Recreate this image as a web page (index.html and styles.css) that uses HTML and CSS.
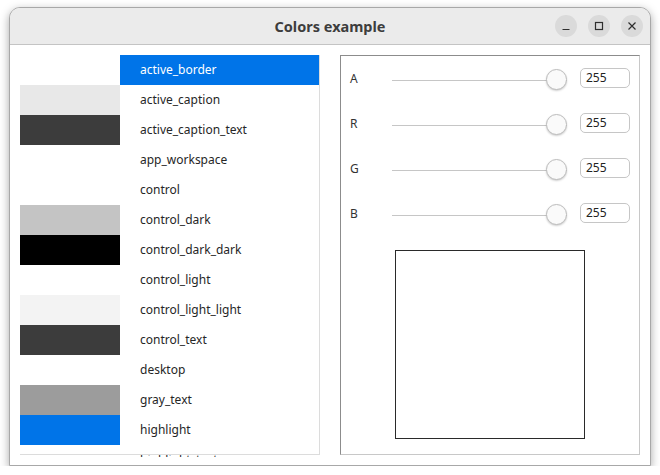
FILE: index.html
```html
<!DOCTYPE html>
<html>
<head>
<meta charset="utf-8">
<link rel="stylesheet" href="styles.css">
</head>
<body>
<div class="window">
  <div class="titlebar">
    <div class="title">Colors example</div>
    <div class="buttons">
      <div class="wbtn"><svg width="10" height="10" viewBox="0 0 10 10"><line x1="1.5" y1="8.5" x2="8.5" y2="8.5" stroke="#2e2e2e" stroke-width="1.2"/></svg></div>
      <div class="wbtn"><svg width="10" height="10" viewBox="0 0 10 10"><rect x="1.5" y="1.5" width="7" height="7" fill="none" stroke="#2e2e2e" stroke-width="1.2"/></svg></div>
      <div class="wbtn"><svg width="10" height="10" viewBox="0 0 10 10"><path d="M1.5 1.5 L8.5 8.5 M8.5 1.5 L1.5 8.5" stroke="#2e2e2e" stroke-width="1.2"/></svg></div>
    </div>
  </div>
  <div class="content">
    <div class="list">
      <div class="row sel"><div class="sw" style="background:#ffffff"></div><div class="name">active_border</div></div>
      <div class="row"><div class="sw" style="background:#e8e8e8"></div><div class="name">active_caption</div></div>
      <div class="row"><div class="sw" style="background:#3c3c3c"></div><div class="name">active_caption_text</div></div>
      <div class="row"><div class="sw" style="background:#ffffff"></div><div class="name">app_workspace</div></div>
      <div class="row"><div class="sw" style="background:#ffffff"></div><div class="name">control</div></div>
      <div class="row"><div class="sw" style="background:#c4c4c4"></div><div class="name">control_dark</div></div>
      <div class="row"><div class="sw" style="background:#000000"></div><div class="name">control_dark_dark</div></div>
      <div class="row"><div class="sw" style="background:#ffffff"></div><div class="name">control_light</div></div>
      <div class="row"><div class="sw" style="background:#f3f3f3"></div><div class="name">control_light_light</div></div>
      <div class="row"><div class="sw" style="background:#3c3c3c"></div><div class="name">control_text</div></div>
      <div class="row"><div class="sw" style="background:#ffffff"></div><div class="name">desktop</div></div>
      <div class="row"><div class="sw" style="background:#9c9c9c"></div><div class="name">gray_text</div></div>
      <div class="row"><div class="sw" style="background:#0074e8"></div><div class="name">highlight</div></div>
      <div class="row"><div class="sw" style="background:#ffffff"></div><div class="name">highlight_text</div></div>
    </div>
    <div class="panel">
      <div class="srow"><div class="lbl">A</div><div class="slider"><div class="track"></div><div class="knob"></div></div><div class="num">255</div></div>
      <div class="srow"><div class="lbl">R</div><div class="slider"><div class="track"></div><div class="knob"></div></div><div class="num">255</div></div>
      <div class="srow"><div class="lbl">G</div><div class="slider"><div class="track"></div><div class="knob"></div></div><div class="num">255</div></div>
      <div class="srow"><div class="lbl">B</div><div class="slider"><div class="track"></div><div class="knob"></div></div><div class="num">255</div></div>
      <div class="preview"></div>
    </div>
  </div>
</div>
</body>
</html>
```
FILE: styles.css
```css
html, body {
  margin: 0;
  padding: 0;
  background: #ffffff;
  font-family: "Noto Sans", "DejaVu Sans", sans-serif;
}
.window {
  margin: 7px 0 0 9px;
  width: 640px;
  border: 1px solid #a8a8a8;
  border-radius: 11px 11px 0 0;
  box-shadow: 0 3px 10px rgba(0,0,0,0.35);
  background: #ffffff;
  overflow: hidden;
}
.titlebar {
  height: 36px;
  background: #ebebeb;
  border-bottom: 1px solid #c4c4c4;
  display: flex;
  align-items: center;
  justify-content: center;
  position: relative;
}
.title {
  font-weight: bold;
  font-size: 14.5px;
  color: #3d3d3d;
}
.buttons {
  position: absolute;
  right: 7px;
  top: 7px;
  display: flex;
  gap: 11px;
}
.wbtn {
  width: 22px;
  height: 22px;
  border-radius: 50%;
  background: #dadada;
  display: flex;
  align-items: center;
  justify-content: center;
}
.content {
  display: flex;
  align-items: flex-start;
  gap: 20px;
  padding: 10px;
}
.list {
  width: 300px;
  height: 402px;
  margin-bottom: -2px;
  overflow: hidden;
  position: relative;
}
.list::after {
  content: "";
  position: absolute;
  right: 0;
  top: 0;
  height: 400px;
  width: 1px;
  background: #dcdcdc;
}
.list::before {
  content: "";
  position: absolute;
  left: 0;
  right: 0;
  top: 399px;
  height: 1px;
  background: #dcdcdc;
  z-index: 1;
}
.row {
  display: flex;
  height: 30px;
}
.sw {
  width: 100px;
  flex: none;
}
.name {
  flex: 1;
  padding-left: 20px;
  font-size: 12px;
  line-height: 30px;
  color: #262626;
}
.row.sel .name {
  background: #0074e8;
  color: #ffffff;
}
.panel {
  width: 298px;
  height: 398px;
  border: 1px solid #c8c8c8;
  border-left-color: #8c8c8c;
  border-top-color: #8c8c8c;
  display: flex;
  flex-direction: column;
  align-items: stretch;
}
.srow {
  height: 45px;
  display: flex;
  align-items: center;
  padding: 0 9px;
}
.lbl {
  width: 42px;
  font-size: 12px;
  color: #333333;
}
.slider {
  width: 175px;
  height: 22px;
  position: relative;
  display: flex;
  align-items: center;
  margin-top: 3px;
}
.track {
  flex: 1;
  height: 1px;
  background: #c6c6c6;
}
.knob {
  position: absolute;
  right: 0;
  top: 0;
  width: 19px;
  height: 19px;
  border-radius: 50%;
  background: #fafafa;
  border: 1px solid #bdbdbd;
  box-shadow: 0 1px 2px rgba(0,0,0,0.2);
}
.num {
  margin-left: 13px;
  width: 43px;
  height: 18px;
  border: 1px solid #c6c6c6;
  border-radius: 5px;
  padding-left: 5px;
  font-size: 12px;
  line-height: 17px;
  color: #222222;
  margin-top: -2px;
}
.preview {
  align-self: center;
  margin-top: 14px;
  width: 188px;
  height: 187px;
  border: 1px solid #2a2a2a;
  background: #ffffff;
}
```
